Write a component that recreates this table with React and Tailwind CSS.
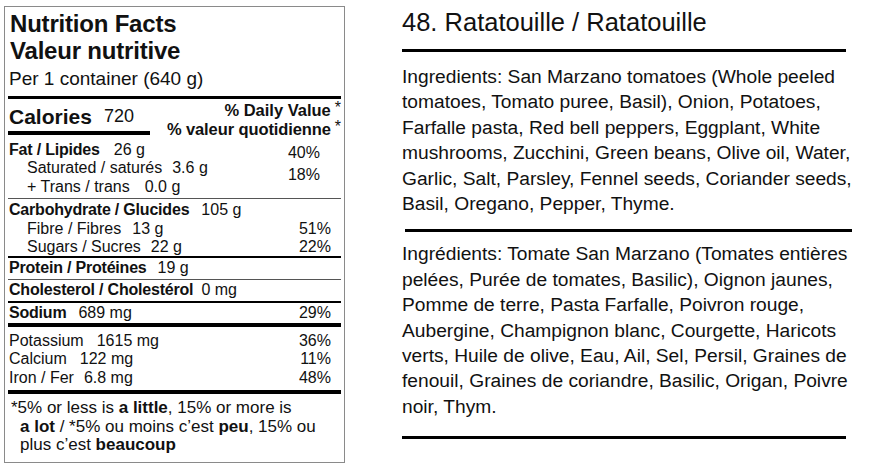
import React from 'react';

function Row({ label, amount, pct, indent, bold, gap = 'gap-[11px]', h = 'h-[18px]' }) {
  return (
    <div className={`flex items-center justify-between ${h} ${indent ? 'pl-[19px]' : 'pl-[1px]'}`}>
      <div className={`flex items-baseline ${gap}`}>
        {bold ? (
          <span className="font-bold text-[16px] leading-none tracking-[-0.2px]">{label}</span>
        ) : (
          <span className="text-[16px] leading-none">{label}</span>
        )}
        <span className="text-[16px] leading-none">{amount}</span>
      </div>
      {pct && <span className="text-[16px] leading-none pr-[10px]">{pct}</span>}
    </div>
  );
}

export default function App() {
  return (
    <div className="w-[874px] h-[469px] bg-white text-[#111] flex" style={{ fontFamily: '"Liberation Sans", Arial, sans-serif' }}>
      {/* Nutrition label */}
      <div className="ml-[4px] mt-[6px] w-[341px] h-[457px] border border-[#8a8a8a] px-[3px] flex flex-col">
        <div className="pt-[3px] pl-[2px] font-bold text-[24px] leading-[27px] tracking-[-0.2px]">
          <div>Nutrition Facts</div>
          <div>Valeur nutritive</div>
        </div>
        <div className="mt-[4px] pl-[1px] h-[22px] flex items-center text-[19px]">Per 1 container (640 g)</div>
        <div className="mt-[6px] h-[3px] bg-black" />

        {/* Calories */}
        <div className="h-[42px] flex justify-between">
          <div className="flex flex-col pt-[4px] w-[142px]">
            <div className="h-[26px] flex items-center gap-[12px] pl-[1px]">
              <span className="font-bold text-[21px] leading-none">Calories</span>
              <span className="text-[18px] leading-none">720</span>
            </div>
            <div className="mt-[2px] h-[4px] bg-black" />
          </div>
          <div className="pt-[2px] flex flex-col items-end">
            <div className="h-[19px] flex items-center font-bold text-[16.5px]">% Daily Value<span className="font-normal text-[16px] ml-[4px] -mt-[5px]">*</span></div>
            <div className="h-[19px] flex items-center font-bold text-[16.5px] tracking-[-0.1px]">% valeur quotidienne<span className="font-normal text-[16px] ml-[4px] -mt-[5px]">*</span></div>
          </div>
        </div>

        {/* Fat group */}
        <div className="flex justify-between">
          <div className="flex flex-col">
            <Row label="Fat / Lipides" amount="26 g" bold gap="gap-[14px]" />
            <Row label="Saturated / saturés" amount="3.6 g" indent gap="gap-[10px]" />
            <Row label="+ Trans / trans" amount="0.0 g" indent gap="gap-[15px]" h="h-[19px]" />
          </div>
          <div className="flex flex-col text-[16px] pr-[21px]">
            <div className="mt-[3px] h-[18px] flex items-center">40%</div>
            <div className="mt-[4px] h-[18px] flex items-center">18%</div>
          </div>
        </div>
        <div className="mt-[2px] h-[1px] bg-[#555]" />

        <div className="mt-[2px]">
          <Row label="Carbohydrate / Glucides" amount="105 g" bold gap="gap-[12px]" />
          <Row label="Fibre / Fibres" amount="13 g" pct="51%" indent h="h-[19px]" />
          <Row label="Sugars / Sucres" amount="22 g" pct="22%" indent gap="gap-[10px]" />
        </div>
        <div className="h-[2px] bg-black" />
        <Row label="Protein / Protéines" amount="19 g" bold h="h-[20px]" />
        <div className="mt-[1px] h-[1px] bg-[#555]" />
        <Row label="Cholesterol / Cholestérol" amount="0 mg" bold gap="gap-[8px]" h="h-[20px]" />
        <div className="mt-[1px] h-[2px] bg-black" />
        <Row label="Sodium" amount="689 mg" pct="29%" bold gap="gap-[12px]" h="h-[20px]" />
        <div className="h-[4px] bg-black" />

        <div className="mt-[5px]">
          <Row label="Potassium" amount="1615 mg" pct="36%" gap="gap-[13px]" />
          <Row label="Calcium" amount="122 mg" pct="11%" gap="gap-[13px]" />
          <Row label="Iron / Fer" amount="6.8 mg" pct="48%" gap="gap-[10px]" h="h-[19px]" />
        </div>
        <div className="mt-[3px] h-[4px] bg-black" />

        <div className="mt-[5px] pl-[3px] text-[17px] leading-[18.5px]">
          <div>*5% or less is <b>a little</b>, 15% or more is</div>
          <div className="pl-[9px]"><b>a lot</b> / *5% ou moins c’est <b>peu</b>, 15% ou</div>
          <div className="pl-[9px]">plus c’est <b>beaucoup</b></div>
        </div>
      </div>

      {/* Ingredients */}
      <div className="ml-[57px] w-[455px] flex flex-col">
        <h1 className="mt-[8px] h-[28px] flex items-center text-[25.5px]">48. Ratatouille / Ratatouille</h1>
        <div className="mt-[13px] w-[444px] h-[3px] bg-black" />
        <p className="mt-[12px] text-[19.2px] leading-[25.4px]">
          Ingredients: San Marzano tomatoes (Whole peeled tomatoes, Tomato puree, Basil), Onion, Potatoes, Farfalle pasta, Red bell peppers, Eggplant, White mushrooms, Zucchini, Green beans, Olive oil, Water, Garlic, Salt, Parsley, Fennel seeds, Coriander seeds, Basil, Oregano, Pepper, Thyme.
        </p>
        <div className="mt-[13px] ml-[3px] w-[447px] h-[3px] bg-black" />
        <p className="mt-[9px] text-[19.2px] leading-[25.4px]">
          Ingrédients: Tomate San Marzano (Tomates entières pelées, Purée de tomates, Basilic), Oignon jaunes, Pomme de terre, Pasta Farfalle, Poivron rouge, Aubergine, Champignon blanc, Courgette, Haricots verts, Huile de olive, Eau, Ail, Sel, Persil, Graines de fenouil, Graines de coriandre, Basilic, Origan, Poivre noir, Thym.
        </p>
        <div className="mt-[17px] w-[444px] h-[3px] bg-black" />
      </div>
    </div>
  );
}
